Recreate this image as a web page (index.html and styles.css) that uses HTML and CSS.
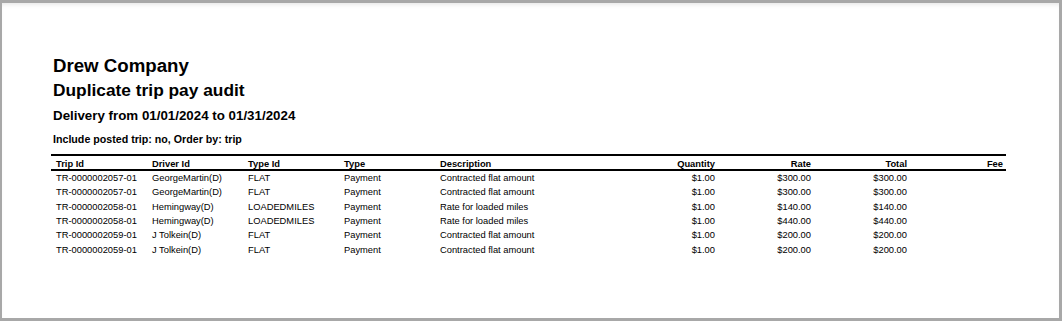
FILE: index.html
```html
<!DOCTYPE html>
<html>
<head>
<meta charset="utf-8">
<link rel="stylesheet" href="styles.css">
</head>
<body>
<div class="page">
  <div class="report">
    <div class="h-company">Drew Company</div>
    <div class="h-title">Duplicate trip pay audit</div>
    <div class="h-range">Delivery from 01/01/2024 to 01/31/2024</div>
    <div class="h-params">Include posted trip: no, Order by: trip</div>
    <div class="grid">
      <div class="row head">
        <div class="c">Trip Id</div><div class="c">Driver Id</div><div class="c">Type Id</div><div class="c">Type</div><div class="c">Description</div><div class="c r">Quantity</div><div class="c r">Rate</div><div class="c r">Total</div><div class="c r">Fee</div>
      </div>
      <div class="row">
        <div class="c">TR-0000002057-01</div><div class="c">GeorgeMartin(D)</div><div class="c">FLAT</div><div class="c">Payment</div><div class="c">Contracted flat amount</div><div class="c r">$1.00</div><div class="c r">$300.00</div><div class="c r">$300.00</div><div class="c r"></div>
      </div>
      <div class="row">
        <div class="c">TR-0000002057-01</div><div class="c">GeorgeMartin(D)</div><div class="c">FLAT</div><div class="c">Payment</div><div class="c">Contracted flat amount</div><div class="c r">$1.00</div><div class="c r">$300.00</div><div class="c r">$300.00</div><div class="c r"></div>
      </div>
      <div class="row">
        <div class="c">TR-0000002058-01</div><div class="c">Hemingway(D)</div><div class="c">LOADEDMILES</div><div class="c">Payment</div><div class="c">Rate for loaded miles</div><div class="c r">$1.00</div><div class="c r">$140.00</div><div class="c r">$140.00</div><div class="c r"></div>
      </div>
      <div class="row">
        <div class="c">TR-0000002058-01</div><div class="c">Hemingway(D)</div><div class="c">LOADEDMILES</div><div class="c">Payment</div><div class="c">Rate for loaded miles</div><div class="c r">$1.00</div><div class="c r">$440.00</div><div class="c r">$440.00</div><div class="c r"></div>
      </div>
      <div class="row">
        <div class="c">TR-0000002059-01</div><div class="c">J Tolkein(D)</div><div class="c">FLAT</div><div class="c">Payment</div><div class="c">Contracted flat amount</div><div class="c r">$1.00</div><div class="c r">$200.00</div><div class="c r">$200.00</div><div class="c r"></div>
      </div>
      <div class="row">
        <div class="c">TR-0000002059-01</div><div class="c">J Tolkein(D)</div><div class="c">FLAT</div><div class="c">Payment</div><div class="c">Contracted flat amount</div><div class="c r">$1.00</div><div class="c r">$200.00</div><div class="c r">$200.00</div><div class="c r"></div>
      </div>
    </div>
  </div>
</div>
</body>
</html>
```
FILE: styles.css
```css
html, body {
  margin: 0;
  padding: 0;
  background: #ffffff;
}
body {
  font-family: "Liberation Sans", Arial, sans-serif;
  color: #000;
}
.page {
  box-sizing: border-box;
  width: 1062px;
  height: 321px;
  border: 3px solid #a8a8a8;
  border-left-width: 2px;
  background: #fff;
  box-shadow: inset 0 4px 5px -3px rgba(0,0,0,0.12);
  overflow: hidden;
}
.report {
  margin-left: 49px;
  width: 955px;
  padding-top: 52px;
}
.h-company {
  font-weight: bold;
  font-size: 18.67px;
  line-height: 22px;
  padding-left: 2px;
}
.h-title {
  font-weight: bold;
  font-size: 17.33px;
  line-height: 22px;
  margin-top: 1.5px;
  padding-left: 2px;
}
.h-range {
  font-weight: bold;
  font-size: 13.33px;
  line-height: 18px;
  margin-top: 6.4px;
  padding-left: 2px;
}
.h-params {
  font-weight: bold;
  font-size: 10.67px;
  line-height: 14px;
  margin-top: 7px;
  padding-left: 2px;
}
.grid {
  margin-top: 8px;
  border-top: 2px solid #000;
  font-size: 9.33px;
}
.row {
  display: grid;
  grid-template-columns: 96px 96px 96px 96px 187px 96px 96px 96px 96px;
  height: 14.4px;
  line-height: 14.4px;
}
.row.head {
  font-weight: bold;
  box-sizing: border-box;
  padding-top: 2px;
  line-height: 12px;
  border-bottom: 2px solid #000;
  height: 15px;
}
.c {
  padding: 0 3px 0 5px;
  white-space: nowrap;
  overflow: hidden;
}
.c.r {
  text-align: right;
}
```
